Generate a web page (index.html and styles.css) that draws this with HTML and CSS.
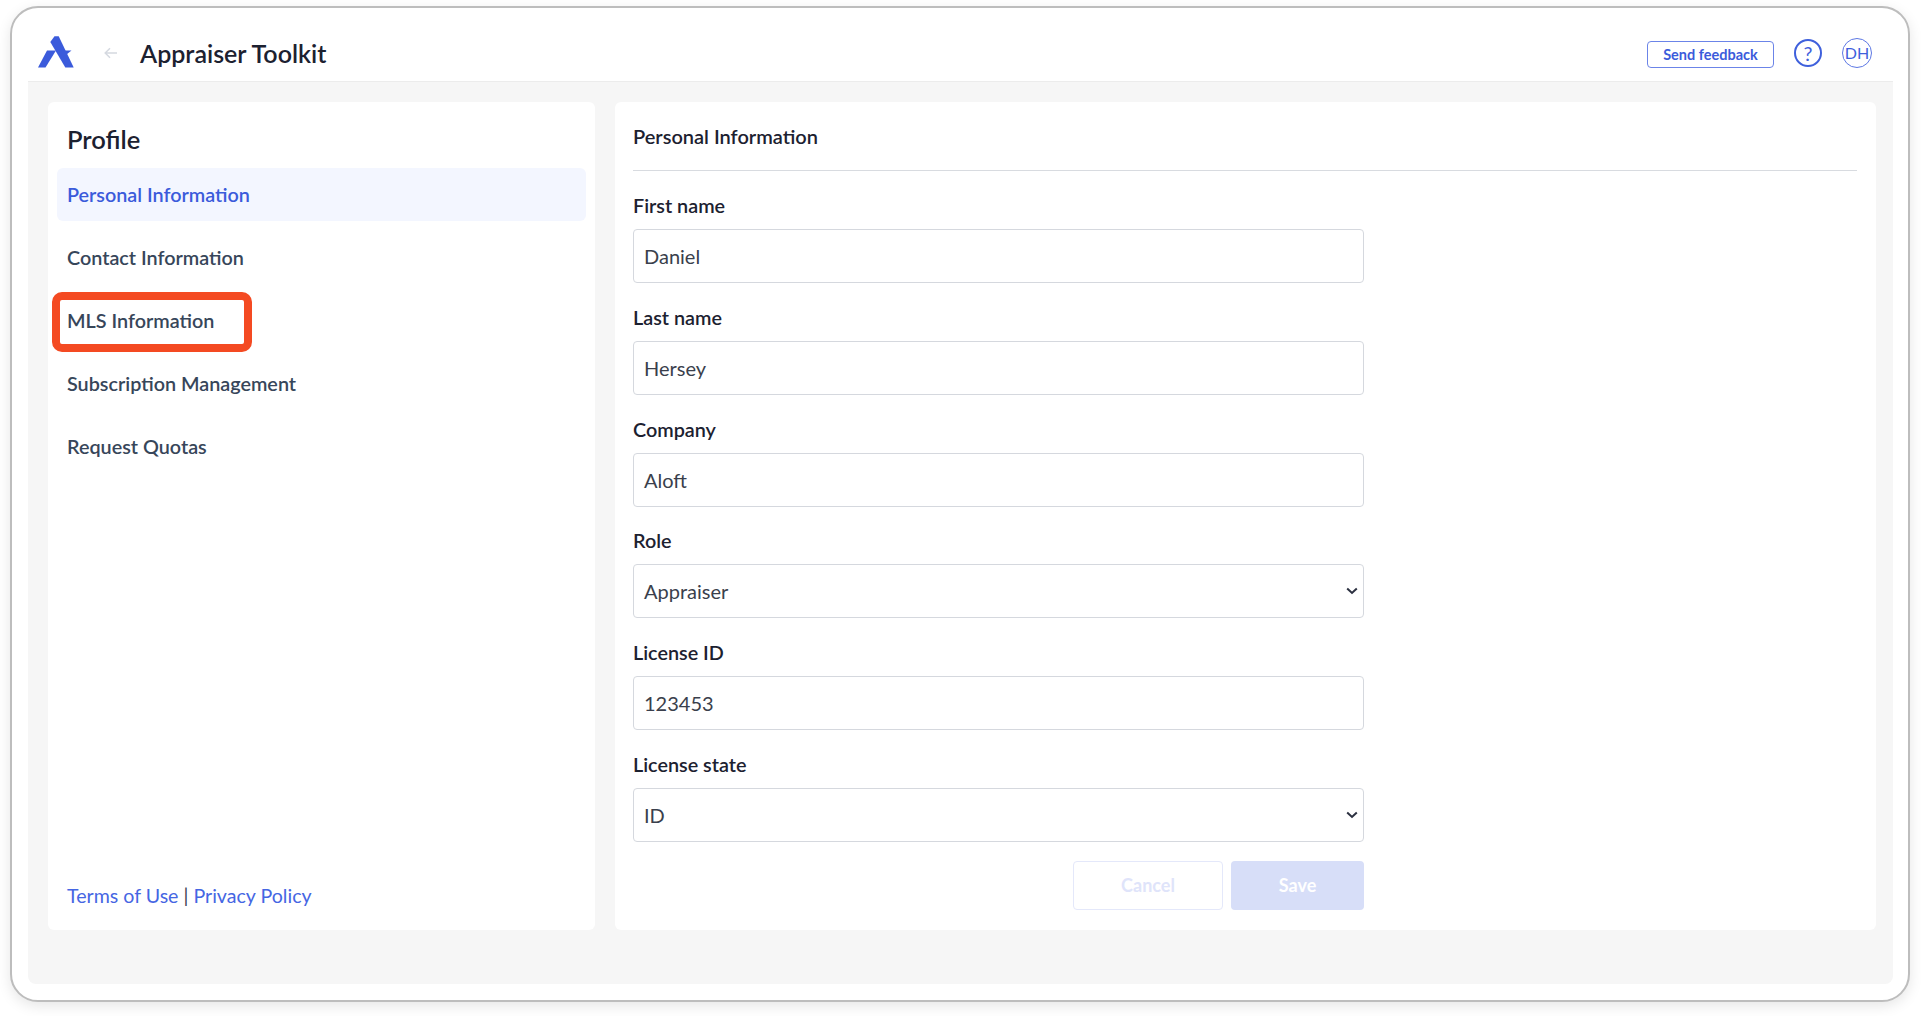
FILE: index.html
```
<!DOCTYPE html>
<html lang="en">
<head>
<meta charset="utf-8">
<title>Appraiser Toolkit</title>
<link rel="stylesheet" href="styles.css">
</head>
<body>
<div class="frame">
  <header class="topbar">
    <svg class="logo" viewBox="0 0 36 32" width="36" height="32" aria-hidden="true">
      <path fill="#3b5bdb" d="M16.5 0.3 L20.7 0.3 L35.7 31.5 L27.3 31.5 L12.3 6 Z"/>
      <path fill="#3b5bdb" d="M0 31.5 L9 14.5 L18 14.5 L7.5 31.5 Z"/>
      <path fill="#3b5bdb" d="M18 14.5 L33.5 14.5 L24.5 21.8 Z"/>
    </svg>
    <svg class="back" viewBox="0 0 14 12" width="14" height="12" aria-hidden="true">
      <path d="M13 6H1.5M6 1.2L1.2 6L6 10.8" fill="none" stroke="#d5d9e0" stroke-width="1.5"/>
    </svg>
    <h1 class="title">Appraiser Toolkit</h1>
    <div class="top-actions">
      <button class="feedback" type="button">Send feedback</button>
      <span class="help">?</span>
      <span class="avatar">DH</span>
    </div>
  </header>
  <main class="workspace">
    <aside class="side card">
      <h2 class="side-title">Profile</h2>
      <nav class="nav">
        <a class="nav-item active">Personal Information</a>
        <a class="nav-item">Contact Information</a>
        <a class="nav-item highlighted">MLS Information</a>
        <a class="nav-item">Subscription Management</a>
        <a class="nav-item">Request Quotas</a>
      </nav>
      <p class="legal"><a>Terms of Use</a> | <a>Privacy Policy</a></p>
    </aside>
    <section class="content card">
      <h2 class="content-title">Personal Information</h2>
      <form class="form">
        <div class="field"><label class="label">First name</label><div class="control">Daniel</div></div>
        <div class="field"><label class="label">Last name</label><div class="control">Hersey</div></div>
        <div class="field"><label class="label">Company</label><div class="control">Aloft</div></div>
        <div class="field"><label class="label">Role</label><div class="control select">Appraiser<svg class="chev" viewBox="0 0 12 8" width="12" height="8"><path d="M1.2 1.5L6 6L10.8 1.5" fill="none" stroke="#2b3040" stroke-width="2"/></svg></div></div>
        <div class="field"><label class="label">License ID</label><div class="control">123453</div></div>
        <div class="field"><label class="label">License state</label><div class="control select">ID<svg class="chev" viewBox="0 0 12 8" width="12" height="8"><path d="M1.2 1.5L6 6L10.8 1.5" fill="none" stroke="#2b3040" stroke-width="2"/></svg></div></div>
        <div class="buttons">
          <button class="btn cancel" type="button">Cancel</button>
          <button class="btn save" type="button">Save</button>
        </div>
      </form>
    </section>
  </main>
</div>
</body>
</html>
```
FILE: styles.css
```
* { box-sizing: border-box; }
html, body { margin: 0; padding: 0; background: #fff; }
body { height: 1016px; overflow: hidden; padding: 6px 11px 14px 10px; font-family: "Lato", "Liberation Sans", sans-serif; color: #1f2430; }
.frame { height: 996px; width: 1900px; border: 2px solid #bdbdbd; border-radius: 28px; background: #fff; box-shadow: 0 4px 14px rgba(0,0,0,.10); padding: 0 15px 16px 16px; display: flex; flex-direction: column; }
.topbar { height: 74px; flex: none; display: flex; align-items: center; border-bottom: 1px solid #ececec; padding: 16px 21px 0 10px; }
.logo { flex: none; margin-bottom: 1px; }
.back { flex: none; margin-left: 30px; }
.title { margin: 0 0 0 22px; font-size: 25px; font-weight: 600; color: #1c2130; }
.top-actions { margin-left: auto; display: flex; align-items: center; }
.feedback { width: 127px; height: 27px; border: 1px solid #6b84e8; border-radius: 4px; background: #fff; color: #3b5bdb; font: 700 14.5px "Lato", sans-serif; padding: 0; margin-top: 3px; }
.help { width: 28px; height: 28px; margin-left: 20px; border: 2px solid #3f60dc; border-radius: 50%; color: #3f60dc; font-size: 20px; display: flex; align-items: center; justify-content: center; }
.avatar { width: 30px; height: 30px; margin-left: 20px; border: 1px solid #5d78e4; border-radius: 50%; color: #3f60dc; font-size: 16px; display: flex; align-items: center; justify-content: center; }
.workspace { flex: 1; background: #f6f6f6; border-radius: 0 0 8px 8px; padding: 20px 17px 54px 20px; display: flex; gap: 20px; min-height: 0; }
.card { background: #fff; border-radius: 6px; }
.side { width: 547px; flex: none; padding: 21px 9px 22px 9px; display: flex; flex-direction: column; }
.side-title { margin: 0 0 13px 10px; font-size: 25.5px; line-height: 32px; font-weight: 600; color: #1c2130; }
.nav { display: flex; flex-direction: column; gap: 10px; flex: 1; }
.nav-item { height: 53px; display: flex; align-items: center; padding: 0 0 2px 10px; font-size: 19.8px; font-weight: 600; color: #37465a; border-radius: 6px; }
.nav-item.active { background: #f3f6ff; color: #3b5bdb; }
.nav-item.highlighted { position: relative; }
.nav-item.highlighted::after { content: ""; box-sizing: border-box; position: absolute; left: -5px; top: -2px; width: 200px; height: 60px; border: 8px solid #f44a22; border-radius: 10px; }
.legal { margin: 0 0 0 10px; font-size: 19.6px; line-height: 24px; color: #3a4252; }
.legal a { color: #4566e3; }
.content { flex: 1; padding: 18px 19px 18px 18px; display: flex; flex-direction: column; }
.content-title { margin: 0; height: 51px; font-size: 20px; line-height: 32px; font-weight: 600; color: #1c2130; border-bottom: 1px solid #d8dbe0; }
.form { width: 731px; display: flex; flex-direction: column; margin-top: 18px; }
.field { height: 111.8px; }
.label { display: block; height: 40px; font-size: 19.8px; line-height: 32px; font-weight: 600; color: #1c2130; }
.control { height: 54px; border: 1px solid #d5d8de; border-radius: 4px; display: flex; align-items: center; justify-content: space-between; padding: 0 5px 0 10px; font-size: 20px; color: #3a3f4c; }
.chev { flex: none; }
.buttons { display: flex; justify-content: flex-end; gap: 8px; margin-top: 1px; }
.btn { height: 49px; border-radius: 4px; font: 700 18px "Lato", sans-serif; padding: 0; }
.cancel { width: 150px; background: #fff; border: 1px solid #e4e8fa; color: #dfe4fa; }
.save { width: 133px; background: #d7def8; border: 0; color: #fff; }
```
